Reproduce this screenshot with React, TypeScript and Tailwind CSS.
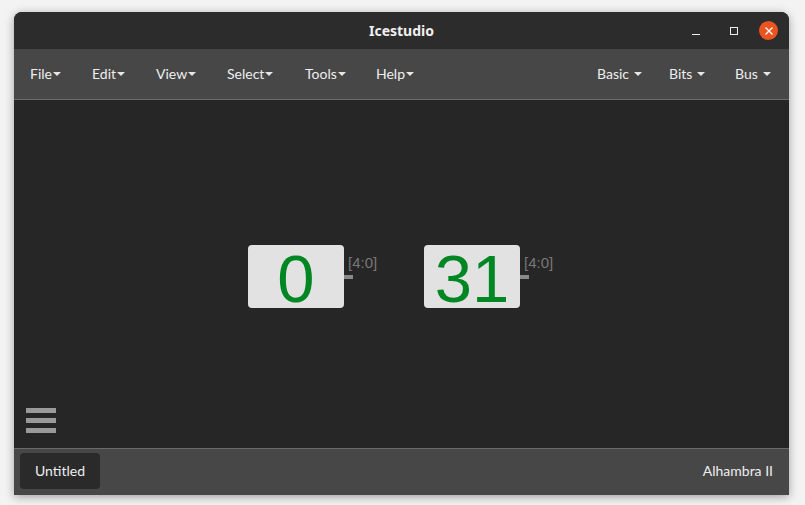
export default function App() {
  const leftMenus = [
    { label: "File", w: "w-[62px]" },
    { label: "Edit", w: "w-[64px]" },
    { label: "View", w: "w-[71px]" },
    { label: "Select", w: "w-[78px]" },
    { label: "Tools", w: "w-[71px]" },
    { label: "Help", w: "w-[60px]" },
  ];
  const rightMenus = [
    { label: "Basic", w: "w-[72px]" },
    { label: "Bits", w: "w-[66px]" },
    { label: "Bus", w: "w-[50px]" },
  ];

  const caret = (
    <span className="inline-block ml-[1px] mt-[2px] w-0 h-0 border-l-4 border-r-4 border-t-4 border-l-transparent border-r-transparent border-t-[#e6e6e6]"></span>
  );

  const blocks = [
    { value: "0", left: "left-[234px]" },
    { value: "31", left: "left-[410px]" },
  ];

  return (
    <div className="w-[805px] h-[505px] bg-[#f3f3f3] pt-[12px] pl-[14px] font-['Lato',sans-serif]">
      <div className="w-[775px] h-[483px] flex flex-col rounded-t-[8px] overflow-hidden shadow-[0_2px_10px_rgba(0,0,0,0.35)] bg-[#262626]">
        {/* Title bar */}
        <div className="h-[37px] bg-[#2c2c2c] flex items-center relative">
          <div className="flex-1 text-center text-[14px] font-bold text-[#f0f0f0] font-['Noto_Sans',sans-serif]">
            Icestudio
          </div>
          <div className="absolute right-[11px] top-0 h-full flex items-center">
            <div className="w-[38px] flex justify-center">
              <span className="block w-[8px] h-[1px] bg-[#eeeeee] mt-[7px]"></span>
            </div>
            <div className="w-[38px] flex justify-center">
              <span className="block w-[8px] h-[8px] border border-[#eeeeee]"></span>
            </div>
            <div className="w-[19px] h-[19px] ml-[6px] rounded-full bg-[#e95420] flex items-center justify-center">
              <svg width="10" height="10" viewBox="0 0 10 10">
                <path d="M1.5 1.5 L8.5 8.5 M8.5 1.5 L1.5 8.5" stroke="#ffffff" strokeWidth="1.3" />
              </svg>
            </div>
          </div>
        </div>

        {/* Menu bar */}
        <div className="h-[51px] bg-[#474747] border-b border-[#6a6a6a] flex items-center pb-[2px] text-[14px] text-[#eeeeee]">
          <div className="flex pl-[16px]">
            {leftMenus.map((m) => (
              <div key={m.label} className={`${m.w} flex items-center`}>
                {m.label}
                {caret}
              </div>
            ))}
          </div>
          <div className="flex ml-auto pr-[4px]">
            {rightMenus.map((m) => (
              <div key={m.label} className={`${m.w} flex items-center`}>
                {m.label}
                <span className="ml-[4px] flex">{caret}</span>
              </div>
            ))}
          </div>
        </div>

        {/* Canvas */}
        <div className="flex-1 relative bg-[#262626]">
          {blocks.map((b) => (
            <div key={b.value} className={`absolute top-[145px] ${b.left} flex`}>
              <div className="w-[96px] h-[63px] rounded-[4px] bg-[#e2e2e2] flex items-center justify-center text-[#008623] text-[67px] leading-none font-['Liberation_Sans',sans-serif] pt-[4px]">
                {b.value}
              </div>
              <div className="relative w-[40px]">
                <div className="absolute left-0 top-[30px] w-[9px] h-[4px] bg-[#8a8a8a]"></div>
                <div className="absolute left-[4px] top-[10px] text-[15px] leading-none text-[#777777] font-['Liberation_Sans',sans-serif]">
                  [4:0]
                </div>
              </div>
            </div>
          ))}

          <div className="absolute left-[12px] bottom-[15px] flex flex-col gap-[5px]">
            <span className="block w-[30px] h-[5px] bg-[#9a9a9a]"></span>
            <span className="block w-[30px] h-[5px] bg-[#9a9a9a]"></span>
            <span className="block w-[30px] h-[5px] bg-[#9a9a9a]"></span>
          </div>
        </div>

        {/* Footer */}
        <div className="h-[47px] bg-[#474747] border-t border-[#6a6a6a] flex items-center pb-[3px] px-[6px] text-[14px] text-[#eeeeee]">
          <div className="w-[80px] h-[36px] rounded-[4px] bg-[#2a2a2a] flex items-center justify-center">
            Untitled
          </div>
          <div className="ml-auto pr-[10px]">Alhambra II</div>
        </div>
      </div>
    </div>
  );
}
